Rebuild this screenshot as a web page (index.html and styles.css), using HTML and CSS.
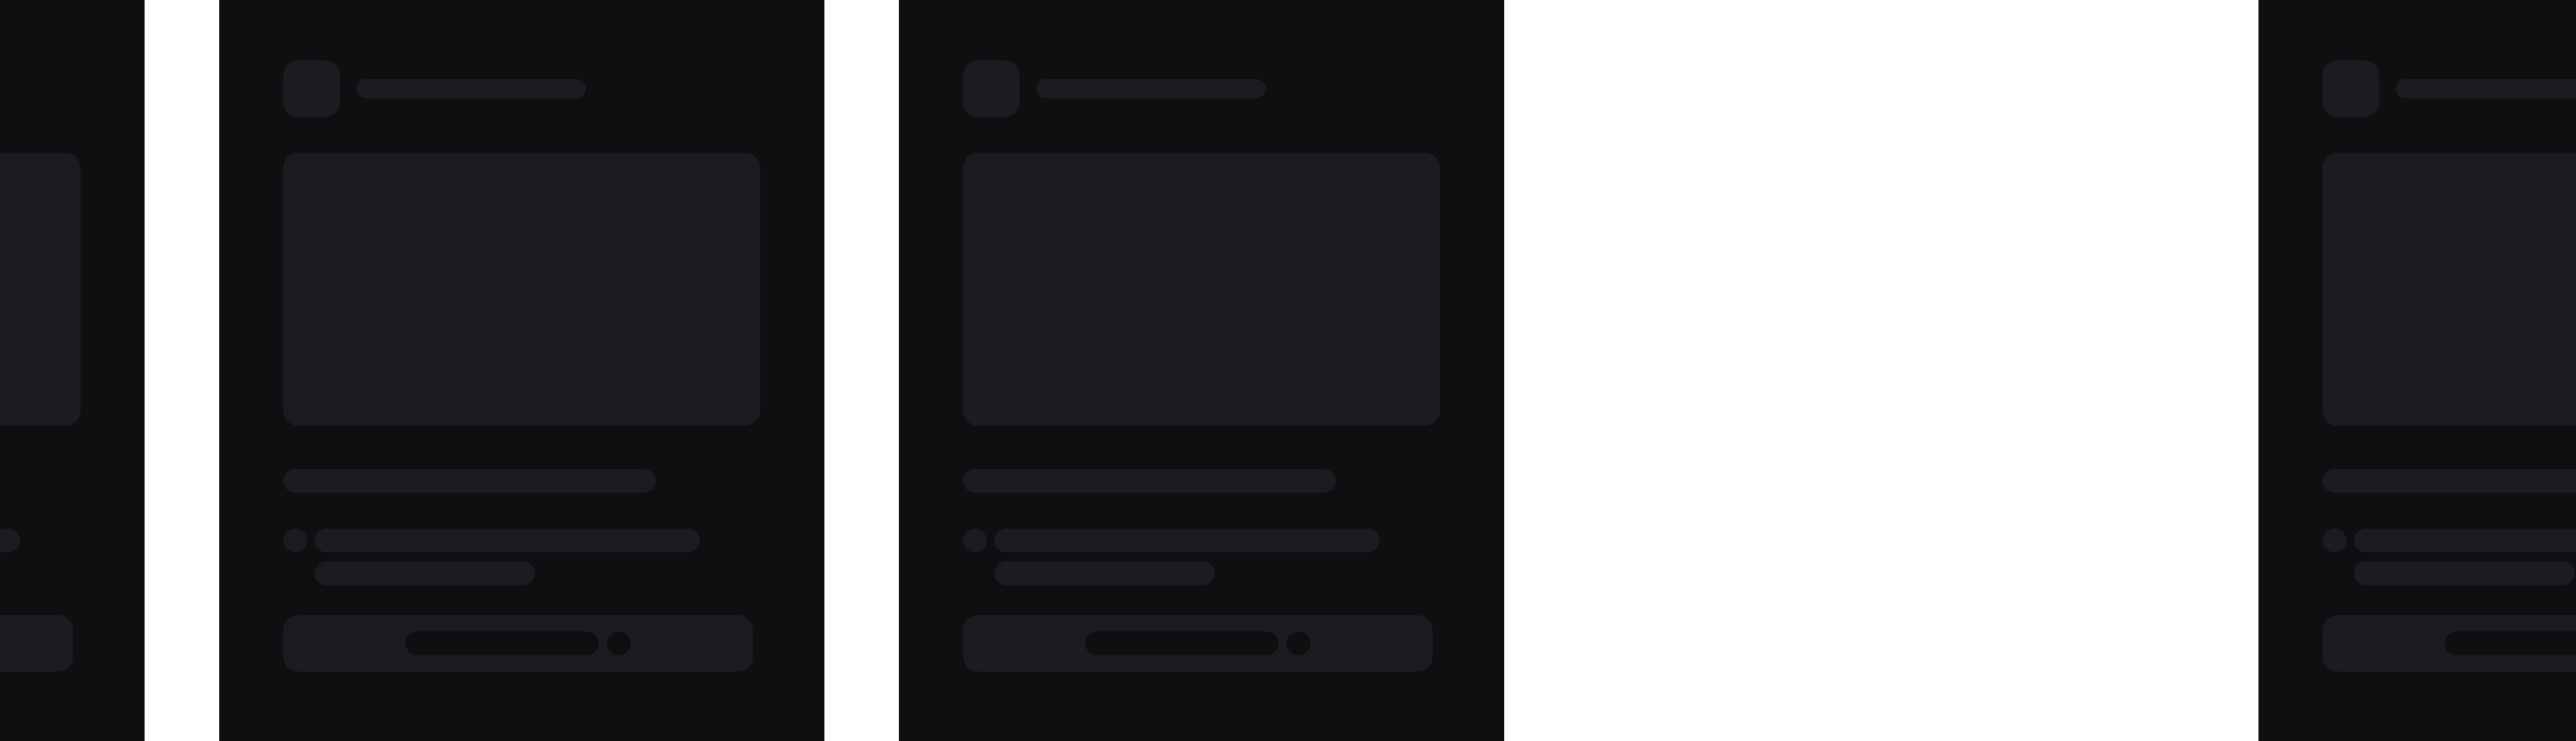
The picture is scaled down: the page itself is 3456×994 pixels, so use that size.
FILE: index.html
```html
<!DOCTYPE html>
<html lang="en">
<head>
    <meta charset="UTF-8">
    <meta name="viewport" content="width=device-width, initial-scale=1.0">
    <title>Loading feed</title>
    <link rel="stylesheet" href="styles.css">
</head>
<body>
    <div class="track">
        <!-- Skeleton cards -->
        <div class="card">
            <div class="card-head">
                <div class="sk avatar"></div>
                <div class="sk pill head-line"></div>
            </div>
            <div class="sk media"></div>
            <div class="sk pill title-line"></div>
            <div class="meta">
                <div class="sk dot"></div>
                <div class="meta-lines">
                    <div class="sk pill line-long"></div>
                    <div class="sk pill line-short"></div>
                </div>
            </div>
            <div class="sk action">
                <div class="pill action-label"></div>
                <div class="action-dot"></div>
            </div>
        </div>

        <div class="card">
            <div class="card-head">
                <div class="sk avatar"></div>
                <div class="sk pill head-line"></div>
            </div>
            <div class="sk media"></div>
            <div class="sk pill title-line"></div>
            <div class="meta">
                <div class="sk dot"></div>
                <div class="meta-lines">
                    <div class="sk pill line-long"></div>
                    <div class="sk pill line-short"></div>
                </div>
            </div>
            <div class="sk action">
                <div class="pill action-label"></div>
                <div class="action-dot"></div>
            </div>
        </div>

        <div class="card">
            <div class="card-head">
                <div class="sk avatar"></div>
                <div class="sk pill head-line"></div>
            </div>
            <div class="sk media"></div>
            <div class="sk pill title-line"></div>
            <div class="meta">
                <div class="sk dot"></div>
                <div class="meta-lines">
                    <div class="sk pill line-long"></div>
                    <div class="sk pill line-short"></div>
                </div>
            </div>
            <div class="sk action">
                <div class="pill action-label"></div>
                <div class="action-dot"></div>
            </div>
        </div>

        <!-- not loaded yet -->
        <div class="card empty"></div>

        <div class="card">
            <div class="card-head">
                <div class="sk avatar"></div>
                <div class="sk pill head-line"></div>
            </div>
            <div class="sk media"></div>
            <div class="sk pill title-line"></div>
            <div class="meta">
                <div class="sk dot"></div>
                <div class="meta-lines">
                    <div class="sk pill line-long"></div>
                    <div class="sk pill line-short"></div>
                </div>
            </div>
            <div class="sk action">
                <div class="pill action-label"></div>
                <div class="action-dot"></div>
            </div>
        </div>
    </div>
</body>
</html>
```

FILE: styles.css
```css
body {
    margin: 0;
    background-color: #ffffff;
    font-family: 'Inter', sans-serif;
    overflow: hidden;
    height: 994px;
}
.track {
    display: flex;
    gap: 100px;
    margin-left: -618px;
    height: 100%;
}
.card {
    flex: 0 0 812px;
    box-sizing: border-box;
    height: 994px;
    padding: 81px 86px 0;
    background-color: #0f0f11;
    display: flex;
    flex-direction: column;
}
.card.empty {
    background-color: transparent;
}
.sk {
    background-color: #1c1b20;
}
.pill {
    border-radius: 999px;
}
.card-head {
    display: flex;
    align-items: center;
    gap: 22px;
}
.avatar {
    width: 76px;
    height: 76px;
    border-radius: 20px;
}
.head-line {
    width: 308px;
    height: 26px;
}
.media {
    width: 640px;
    height: 366px;
    margin-top: 48px;
    border-radius: 20px;
}
.title-line {
    width: 500px;
    height: 32px;
    margin-top: 58px;
}
.meta {
    display: flex;
    gap: 10px;
    margin-top: 48px;
}
.dot {
    width: 32px;
    height: 32px;
    border-radius: 50%;
}
.meta-lines {
    display: flex;
    flex-direction: column;
    gap: 12px;
}
.line-long {
    width: 517px;
    height: 32px;
}
.line-short {
    width: 296px;
    height: 32px;
}
.action {
    width: 630px;
    height: 76px;
    margin-top: 40px;
    border-radius: 20px;
    display: flex;
    align-items: center;
    justify-content: center;
    gap: 11px;
}
.action-label {
    width: 259px;
    height: 32px;
    background-color: #0f0f11;
}
.action-dot {
    width: 32px;
    height: 32px;
    border-radius: 50%;
    background-color: #0f0f11;
}
```
